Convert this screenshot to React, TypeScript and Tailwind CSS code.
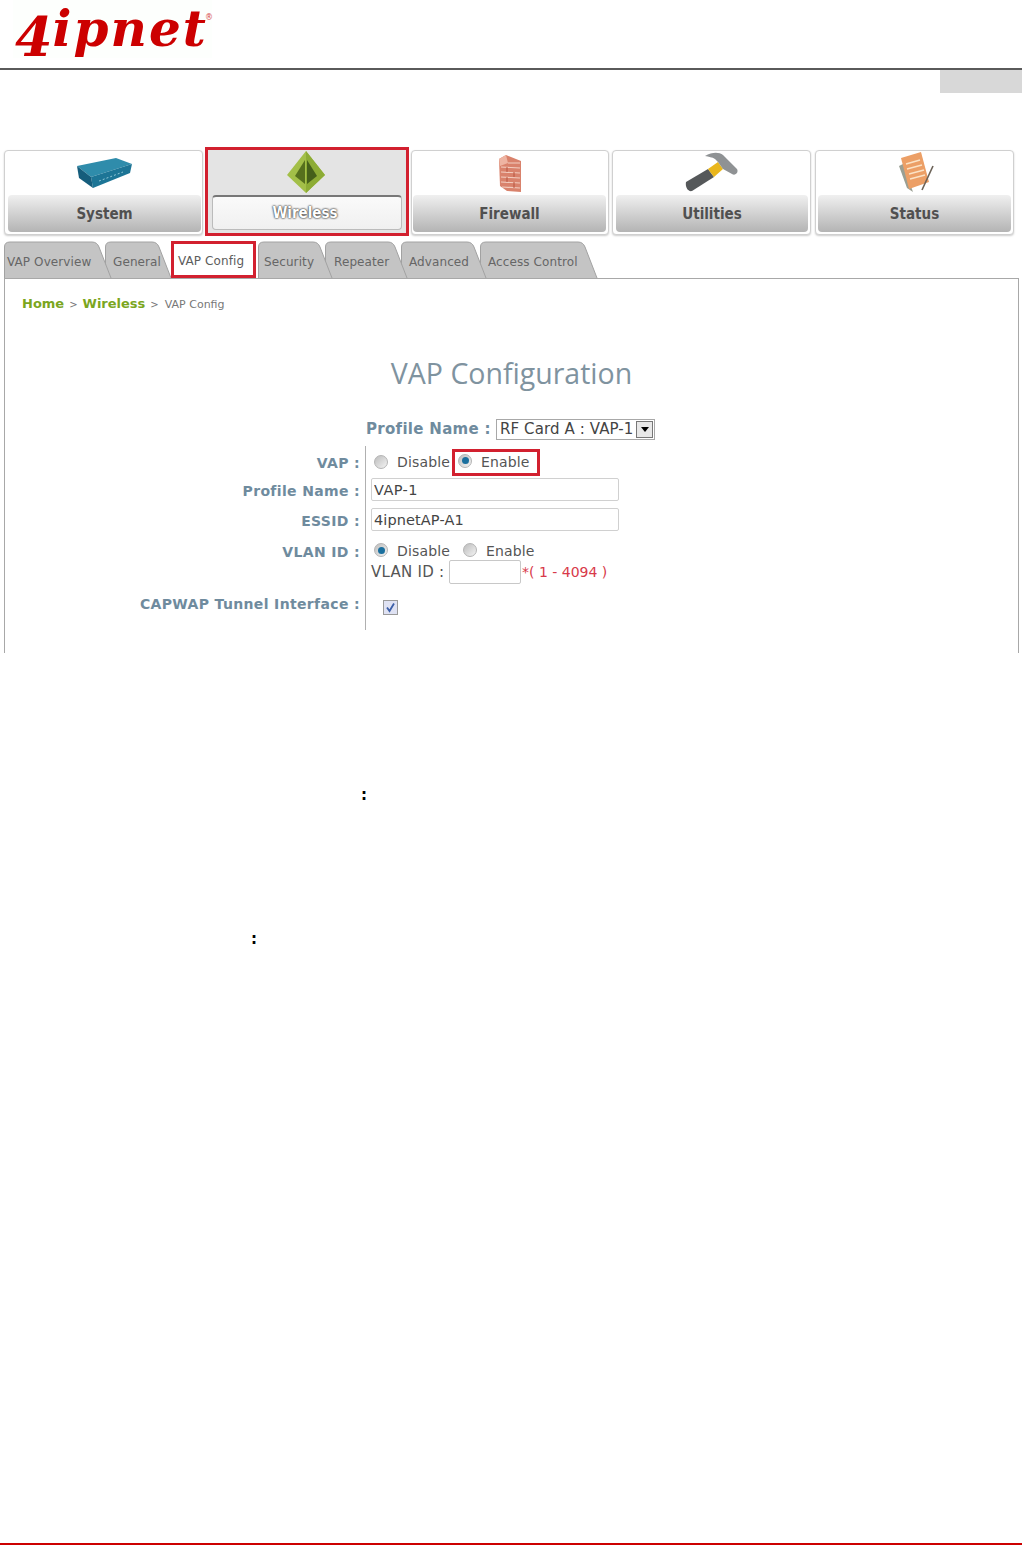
import type { ReactNode } from "react"

const verdana = "font-['DejaVu_Sans',sans-serif]"
const navFont = "font-['DejaVu_Sans_Condensed','DejaVu_Sans',sans-serif]"

function RouterIcon() {
  return (
    <svg width="60" height="34" viewBox="0 0 60 34">
      <polygon points="2,10 41,2 57,8 16,21" fill="#2f8cab" />
      <polygon points="16,21 57,8 55,17 18,32" fill="#1d7596" />
      <polygon points="2,10 16,21 18,32 4,22" fill="#155d7c" />
      <path d="M24 25 L48 16" stroke="#8fc7d6" strokeWidth="1" strokeDasharray="2 2" />
    </svg>
  )
}

function PyramidIcon() {
  return (
    <svg width="40" height="43" viewBox="0 0 40 43">
      <polygon points="19,0 0,24 19,42 38,24" fill="#a3bf48" />
      <polygon points="19,0 38,24 19,42" fill="#8dac35" />
      <polygon points="18,9 8,25 18,33" fill="#56701d" />
      <polygon points="20,9 30,25 20,33" fill="#45601a" />
    </svg>
  )
}

function FirewallIcon() {
  return (
    <svg width="24" height="38" viewBox="0 0 24 38">
      <polygon points="1,4 8,0 23,6 23,37 9,36 2,31" fill="#d9826c" />
      <polygon points="1,4 8,0 10,8 2,11" fill="#eeb4a2" />
      <path d="M3 12 L22 13 M3 17 L22 18 M3 22 L22 23 M3 27 L22 28 M4 32 L22 33 M10 8 L22 8" stroke="#f3cdbf" strokeWidth="1.2" />
      <path d="M9 12 V17 M16 17 V22 M9 22 V27 M16 27 V33" stroke="#b9553f" strokeWidth="1" />
    </svg>
  )
}

function HammerIcon() {
  return (
    <svg width="54" height="40" viewBox="0 0 54 40">
      <path d="M1 30 L23 17 L29 25 L7 39 C3 40 0 35 1 30 Z" fill="#55585a" />
      <path d="M23 17 L33 10 L38 17 L29 25 Z" fill="#e9b61c" />
      <path d="M20 4 C27 0 34 0 38 3 L52 17 C54 21 50 24 47 22 L38 17 L33 10 L30 7 C27 5 24 5 20 4 Z" fill="#8f9294" />
    </svg>
  )
}

function NotesIcon() {
  return (
    <svg width="40" height="42" viewBox="0 0 40 42">
      <polygon points="4,14 8,12 18,40 12,36" fill="#9a9f93" />
      <polygon points="6,6 26,0 34,30 14,37" fill="#ec9f66" />
      <path d="M11 12 L25 8 M12 17 L27 13 M14 22 L29 18 M15 27 L30 23" stroke="#fbe3c6" strokeWidth="1.4" />
      <path d="M38 14 L27 38" stroke="#6b6257" strokeWidth="1.6" />
    </svg>
  )
}

function Radio({ checked, className = "" }: { checked?: boolean; className?: string }) {
  return (
    <span className={`w-[14px] h-[14px] rounded-full border border-[#b4b4b4] bg-gradient-to-br from-[#bdbdbd] to-[#f4f4f4] flex items-center justify-center shrink-0 ${className}`}>
      {checked && <span className="w-[7px] h-[7px] rounded-full bg-[#1a6f9e]" />}
    </span>
  )
}

const navItems: { label: string; className: string; icon: ReactNode; iconClass: string }[] = [
  { label: "System", className: "w-[199px] pl-[3px] pr-[1px]", icon: <RouterIcon />, iconClass: "pt-[5px]" },
  { label: "Firewall", className: "ml-[2px] w-[198px] pl-[1px] pr-[2px]", icon: <FirewallIcon />, iconClass: "pt-[4px]" },
  { label: "Utilities", className: "ml-[3px] w-[199px] pl-[3px] pr-[2px]", icon: <HammerIcon />, iconClass: "pt-[1px]" },
  { label: "Status", className: "ml-[4px] w-[199px] px-[2px]", icon: <NotesIcon />, iconClass: "pt-[1px]" },
]

function NavCard({ label, className, icon, iconClass }: (typeof navItems)[number]) {
  return (
    <div className={`${className} mt-[3px] h-[85px] rounded-[4px] border border-[#d0d0d0] bg-white shadow-[0_1px_2px_rgba(0,0,0,0.2)] flex flex-col`}>
      <div className={`h-[44px] flex justify-center blur-[0.4px] ${iconClass}`}>{icon}</div>
      <div className={`h-[37px] pt-[2px] rounded-[4px] bg-gradient-to-b from-[#f0f0f0] to-[#b4b4b4] flex items-center justify-center text-[15px] font-bold text-[#505050] ${navFont}`}>
        {label}
      </div>
    </div>
  )
}

const tabs = [
  { label: "VAP Overview", w: 108, className: "w-[108px] pl-[3px] z-[7]" },
  { label: "General", w: 67, className: "w-[67px] pl-[8px] -ml-[7px] z-[6]" },
  { label: "VAP Config", w: 85, active: true, className: "w-[85px] -ml-[1px] z-[8]" },
  { label: "Security", w: 75, className: "w-[75px] pl-[6px] ml-[2px] z-[4]" },
  { label: "Repeater", w: 83, className: "w-[83px] pl-[9px] -ml-[8px] z-[3]" },
  { label: "Advanced", w: 86, className: "w-[86px] pl-[8px] -ml-[7px] z-[2]" },
  { label: "Access Control", w: 118, className: "w-[118px] pl-[8px] -ml-[7px] z-[1]" },
]

function Tab({ label, w, active, className }: (typeof tabs)[number]) {
  if (active) {
    return (
      <div className={`${className} relative h-[37px] border-[3px] border-[#d2202f] bg-white flex items-center pl-[4px] pt-[3px] text-[12px] tracking-[0.1px] text-[#5c5c5c]`}>
        {label}
      </div>
    )
  }
  return (
    <div className={`${className} relative h-[37px] flex items-center text-[12px] tracking-[0.1px] text-[#666]`}>
      <svg className="absolute left-0 top-0" width={w} height="37" viewBox={`0 0 ${w} 37`}>
        <path
          d={`M0.5 37 V6 Q0.5 1 6 1 H${w - 20} Q${w - 15} 1 ${w - 13} 6 L${w - 1} 37`}
          fill="#c4c4c4"
          stroke="#a2a2a2"
        />
      </svg>
      <span className="relative pt-[4px]">{label}</span>
    </div>
  )
}

function Label({ children, className }: { children: ReactNode; className: string }) {
  return (
    <div className={`pr-[5px] text-right text-[14px] font-bold text-[#6f8b9e] tracking-[0.35px] ${className}`}>
      {children}
    </div>
  )
}

export default function App() {
  return (
    <div className={`w-[1022px] h-[1545px] bg-white flex flex-col overflow-hidden ${verdana}`}>
      <header className="h-[70px] border-b-2 border-[#5a5a5a] shrink-0 pl-[13px]">
        <div className="relative w-[199px] h-[58px] bg-[#fdfffd]">
          <span className="block pl-[2px] font-['DejaVu_Serif',serif] font-bold italic text-[50px] leading-[58px] text-[#cc0000] tracking-[2px] whitespace-nowrap">
            <span className="text-[54px] align-[-10px] tracking-normal">4</span>ipnet
          </span>
          <span className="absolute left-[192px] top-[14px] text-[8px] leading-none text-[#d84a4a]">®</span>
        </div>
      </header>

      <div className="flex justify-end shrink-0">
        <div className="w-[82px] h-[23px] bg-[#d8d8d8]" />
      </div>

      <nav className="flex pl-[4px] mt-[54px] h-[89px] shrink-0">
        <NavCard {...navItems[0]} />
        <div className="ml-[2px] w-[204px] h-[89px] border-[3px] border-[#d2202f] bg-[#e4e4e4] px-[4px] flex flex-col">
          <div className="h-[45px] flex justify-center pt-[1px] blur-[0.4px]">
            <PyramidIcon />
          </div>
          <div className={`h-[35px] rounded-[4px] border-t-2 border-x border-b border-t-[#777] border-x-[#bbb] border-b-[#bbb] bg-gradient-to-b from-[#fafafa] to-[#f0f0f0] flex items-center justify-center pr-[4px] text-[15px] font-bold text-white [text-shadow:0_0_2px_#333,0_0_2px_#333] ${navFont}`}>
            Wireless
          </div>
        </div>
        <NavCard {...navItems[1]} />
        <NavCard {...navItems[2]} />
        <NavCard {...navItems[3]} />
      </nav>

      <div className="flex pl-[4px] mt-[5px] h-[37px] shrink-0">
        {tabs.map((tab) => (
          <Tab key={tab.label} {...tab} />
        ))}
      </div>

      <main className="ml-[4px] w-[1015px] h-[375px] shrink-0 border-x border-t border-[#a8a8a8] pl-[17px]">
        <div className="flex items-baseline gap-[5px] mt-[15px] h-[20px] text-[#7ba61e]">
          <span className="text-[13px] font-bold">Home</span>
          <span className="text-[10px] text-[#777]">&gt;</span>
          <span className="text-[13px] font-bold">Wireless</span>
          <span className="text-[10px] text-[#777]">&gt;</span>
          <span className="ml-[1px] text-[11px] text-[#777]">VAP Config</span>
        </div>

        <h1 className="-ml-[17px] mt-[37px] h-[44px] text-center text-[28.5px] leading-[44px] text-[#7f939f] font-['Open_Sans',sans-serif]">
          VAP Configuration
        </h1>

        <div className="-ml-[17px] pl-[361px] mt-[23px] h-[22px] flex items-center text-[15px]">
          <span className="font-bold text-[#6f8b9e] w-[130px] tracking-[0.3px] whitespace-nowrap">Profile Name :</span>
          <div className="w-[159px] h-[21px] border border-[#a8a8a8] flex items-center justify-between pl-[3px] pr-px text-[#444] tracking-[0.1px] whitespace-nowrap">
            <span>RF Card A : VAP-1</span>
            <span className="w-[17px] h-[17px] border border-[#777] bg-[#e8e8e8] flex items-center justify-center shrink-0">
              <span className="border-x-[4px] border-x-transparent border-t-[5px] border-t-black" />
            </span>
          </div>
        </div>

        <div className="-ml-[17px] mt-[6px] grid grid-cols-[360px_1fr] text-[14px] tracking-[0.15px] text-[#555]">
          <Label className="h-[30px] pt-[7px]">VAP :</Label>
          <div className="h-[30px] border-l border-[#b0b0b0] pl-[8px] flex items-start">
            <div className="flex items-center gap-[9px] pt-[6px] w-[78px]">
              <Radio className="mb-[2px]" />
              <span>Disable</span>
            </div>
            <div className="h-[27px] mt-[3px] w-[88px] border-[3px] border-[#d2202f] flex items-center gap-[9px] pl-[3px]">
              <Radio checked className="mb-[4px]" />
              <span>Enable</span>
            </div>
          </div>

          <Label className="h-[29px] pt-[5px]">Profile Name :</Label>
          <div className="h-[29px] border-l border-[#b0b0b0] pl-[5px] pt-[2px]">
            <input readOnly value="VAP-1" className="w-[248px] h-[23px] border border-[#d0d0d0] rounded-[2px] px-[2px] outline-none text-[14.5px] tracking-[0.4px] text-[#444]" />
          </div>

          <Label className="h-[29px] pt-[6px]">ESSID :</Label>
          <div className="h-[29px] border-l border-[#b0b0b0] pl-[5px] pt-[3px]">
            <input readOnly value="4ipnetAP-A1" className="w-[248px] h-[23px] border border-[#d0d0d0] rounded-[2px] px-[2px] outline-none text-[14.5px] tracking-[0.1px] text-[#444]" />
          </div>

          <Label className="h-[56px] pt-[8px]">VLAN ID :</Label>
          <div className="h-[56px] border-l border-[#b0b0b0] pl-[5px]">
            <div className="flex items-center h-[24px] pt-[10px] pl-[3px]">
              <Radio checked className="mb-[2px]" />
              <span className="ml-[9px] w-[66px]">Disable</span>
              <Radio className="mb-[2px]" />
              <span className="ml-[9px]">Enable</span>
            </div>
            <div className="flex items-center h-[26px] mt-px">
              <span className="w-[78px] pt-px text-[15px] tracking-[0.25px]">VLAN ID :</span>
              <input readOnly className="w-[72px] h-[24px] border border-[#c8c8c8] rounded-[2px] outline-none" />
              <span className="ml-px tracking-normal text-[#d8394a]">*( 1 - 4094 )</span>
            </div>
          </div>

          <Label className="h-[40px] pt-[4px]">CAPWAP Tunnel Interface :</Label>
          <div className="h-[40px] border-l border-[#b0b0b0] pl-[17px] pt-[10px]">
            <span className="w-[15px] h-[15px] border border-[#9a9a9a] bg-[#dfe2f3] flex items-center justify-center">
              <svg width="11" height="11" viewBox="0 0 11 11">
                <path d="M2 5.5 L4.5 9 L9 1.5" fill="none" stroke="#3c5fa8" strokeWidth="1.8" />
              </svg>
            </span>
          </div>
        </div>
      </main>

      <div className="pl-[361px] mt-[132px] h-[20px] text-[15px] font-bold leading-[20px] text-black">:</div>
      <div className="pl-[251px] mt-[124px] h-[20px] text-[15px] font-bold leading-[20px] text-black">:</div>

      <div className="mt-auto h-[2px] bg-[#cc0000] shrink-0" />
    </div>
  )
}
